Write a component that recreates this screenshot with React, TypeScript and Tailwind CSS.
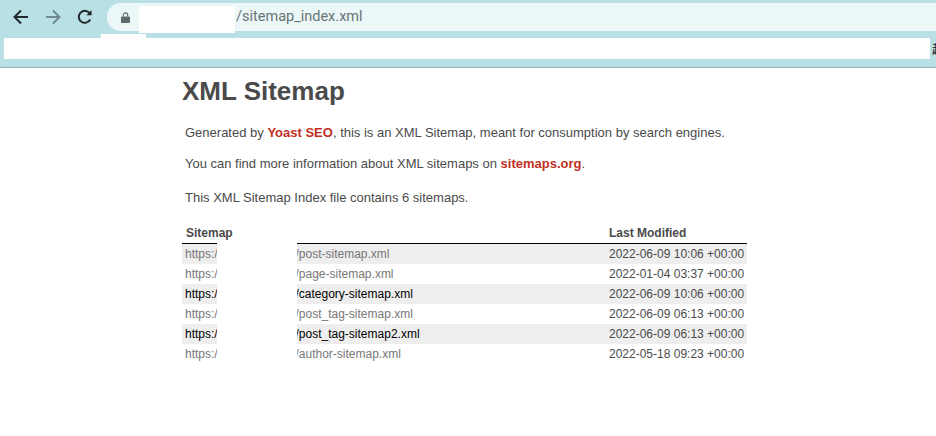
const rows: [string, string, boolean][] = [
  ["/post-sitemap.xml", "2022-06-09 10:06 +00:00", false],
  ["/page-sitemap.xml", "2022-01-04 03:37 +00:00", false],
  ["/category-sitemap.xml", "2022-06-09 10:06 +00:00", true],
  ["/post_tag-sitemap.xml", "2022-06-09 06:13 +00:00", false],
  ["/post_tag-sitemap2.xml", "2022-06-09 06:13 +00:00", true],
  ["/author-sitemap.xml", "2022-05-18 09:23 +00:00", false],
];

export default function App() {
  return (
    <div className="relative w-[936px] h-[436px] overflow-hidden bg-white font-['Liberation_Sans',Arial,sans-serif] text-[#4a4a4a]">
      <div className="relative h-[68px] bg-[#b9e0e5] border-b border-[#8fb0b5] overflow-hidden">
        <div className="flex items-start h-[34px] pt-[3px]">
          <div className="flex items-center h-[28px] w-[107px] pl-[13px] gap-[16px]">
            <svg width="16" height="16" viewBox="0 0 16 16" fill="none" stroke="#202a2c" strokeWidth="2">
              <path d="M15 8H2M8 1.5 1.5 8 8 14.5" />
            </svg>
            <svg width="16" height="16" viewBox="0 0 16 16" fill="none" stroke="#6f8a8e" strokeWidth="2">
              <path d="M1 8h13M8 1.5 14.5 8 8 14.5" />
            </svg>
            <svg width="16" height="16" viewBox="0 0 16 16" fill="none" stroke="#202a2c" strokeWidth="2">
              <path d="M13.2 10.5A6 6 0 1 1 12.4 3.9L14 5.6" />
              <path d="M14.5 1v5.2H9.3" strokeWidth="0" fill="#202a2c" />
            </svg>
          </div>
          <div className="flex-1 h-[28px] rounded-l-full bg-[#ecf7f8] flex items-center pl-[14px]">
            <svg width="9" height="11" viewBox="0 0 10 12" fill="#5f6a6d">
              <path d="M1 5h8a1 1 0 0 1 1 1v5a1 1 0 0 1-1 1H1a1 1 0 0 1-1-1V6a1 1 0 0 1 1-1Z" />
              <path d="M2.5 5V3.4a2.5 2.5 0 0 1 5 0V5" fill="none" stroke="#5f6a6d" strokeWidth="1.2" />
            </svg>
            <span className="ml-[106px] text-[14.5px] text-[#697376] font-['Roboto',sans-serif]">/sitemap_index.xml</span>
          </div>
        </div>
        <div className="flex items-center mt-[4px] pl-[4px]">
          <div className="w-[926px] h-[21px] bg-white shrink-0" />
          <span className="ml-[2px] shrink-0 text-[12px] leading-none text-[#222] font-['Noto_Sans_CJK_SC',sans-serif]">起</span>
        </div>
        <div className="absolute left-[139px] top-[6px] w-[96px] h-[27px] bg-white" />
        <div className="absolute left-[101px] top-[34px] w-[45px] h-[4px] bg-white" />
      </div>

      <div className="relative ml-[182px] w-[565px]">
        <h1 className="mt-[7px] text-[26px] leading-[32px] font-bold">XML Sitemap</h1>
        <p className="ml-[3px] mt-[18px] text-[13px] leading-[16px]">
          Generated by <a className="font-bold text-[#c0301f]">Yoast SEO</a>, this is an XML Sitemap, meant for consumption by search engines.
        </p>
        <p className="ml-[3px] mt-[15px] text-[13px] leading-[16px]">
          You can find more information about XML sitemaps on <a className="font-bold text-[#c0301f]">sitemaps.org</a>.
        </p>
        <p className="ml-[3px] mt-[18px] text-[13px] leading-[16px]">This XML Sitemap Index file contains 6 sitemaps.</p>

        <div className="mt-[19px] grid grid-cols-[427px_138px] text-[12px]">
          <div className="h-[19px] pl-[4px] font-bold leading-[16px] border-b border-black">Sitemap</div>
          <div className="h-[19px] font-bold leading-[16px] border-b border-black">Last Modified</div>
          {rows.map(([path, date, dark], i) => (
            <div key={path} className={`col-span-2 grid grid-cols-[427px_138px] h-[20px] items-center ${i % 2 === 0 ? "bg-[#eeeeee]" : "bg-white"}`}>
              <div className={`pl-[3px] flex ${dark ? "text-black" : "text-[#777]"}`}>
                <span className="w-[110.5px]">https://</span>
                <span>{path}</span>
              </div>
              <div>{date}</div>
            </div>
          ))}
        </div>
        <div className="absolute left-[35px] top-[168px] w-[80px] h-[122px] bg-white" />
      </div>
    </div>
  );
}
